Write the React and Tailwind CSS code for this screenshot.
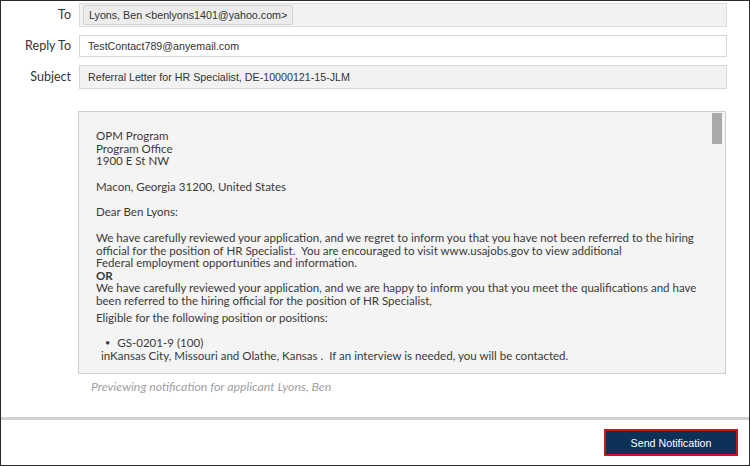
export default function App() {
  const letterFont = { fontFamily: "Lato, 'Open Sans', sans-serif" };
  return (
    <div className="w-[750px] h-[466px] bg-white border border-[#2a2a2a] flex flex-col overflow-hidden">
      <div className="flex flex-col gap-[8px] pt-[2px] pr-[22px] font-['Liberation_Sans',Arial,sans-serif] text-[10.7px] text-[#333]">
        <div className="flex items-center">
          <div className="w-[70px] text-right font-['Lato',sans-serif] text-[12.5px] text-[#333]">To</div>
          <div className="ml-[8px] flex-1 h-[24px] bg-[#f2f2f2] border border-[#dcdcdc] flex items-center pl-[3px]">
            <span className="h-[20px] px-[5px] bg-[#ececec] border border-[#d2d2d2] rounded-[2px] flex items-center">
              Lyons, Ben &lt;benlyons1401@yahoo.com&gt;
            </span>
          </div>
        </div>
        <div className="flex items-center">
          <div className="w-[70px] text-right font-['Lato',sans-serif] text-[12.5px] text-[#333]">Reply To</div>
          <div className="ml-[8px] flex-1 h-[22px] bg-white border border-[#d6d6d6] flex items-center pl-[8px]">
            TestContact789@anyemail.com
          </div>
        </div>
        <div className="flex items-center">
          <div className="w-[70px] text-right font-['Lato',sans-serif] text-[12.5px] text-[#333]">Subject</div>
          <div className="ml-[8px] flex-1 h-[24px] bg-[#f2f2f2] border border-[#d6d6d6] flex items-center pl-[8px]">
            Referral Letter for HR Specialist, DE-10000121-15-JLM
          </div>
        </div>
      </div>

      <div className="mt-[22px] ml-[77px] mr-[23px] h-[263px] bg-[#f4f4f4] border border-[#cfcfcf] flex">
        <div className="flex-1 pl-[17px] pt-[18px] text-[11.55px] leading-[12.6px] text-[#3a3a3a] whitespace-nowrap" style={letterFont}>
          <div>OPM Program</div>
          <div>Program Office</div>
          <div>1900 E St NW</div>
          <div className="mt-[13px]">Macon, Georgia 31200, United States</div>
          <div className="mt-[13px]">Dear Ben Lyons:</div>
          <div className="mt-[13px]">
            We have carefully reviewed your application, and we regret to inform you that you have not been referred to the hiring
            <br />
            official for the position of HR Specialist.&nbsp; You are encouraged to visit www.usajobs.gov to view additional
            <br />
            Federal employment opportunities and information.
          </div>
          <div className="font-bold">OR</div>
          <div>
            We have carefully reviewed your application, and we are happy to inform you that you meet the qualifications and have
            <br />
            been referred to the hiring official for the position of HR Specialist,
          </div>
          <div className="mt-[4px]">Eligible for the following position or positions:</div>
          <div className="mt-[13px] pl-[9px] flex items-center gap-[7px]">
            <span className="text-[9px]">•</span>
            <span>GS-0201-9 (100)</span>
          </div>
          <div className="pl-[5px]">
            inKansas City, Missouri and Olathe, Kansas .&nbsp; If an interview is needed, you will be contacted.
          </div>
        </div>
        <div className="w-[13px] pt-[1px] pr-[3px]">
          <div className="w-[10px] h-[31px] bg-[#a9a9a9]"></div>
        </div>
      </div>

      <div className="ml-[90px] mt-[4px] text-[12.3px] italic text-[#a0a0a0]" style={letterFont}>
        Previewing notification for applicant Lyons, Ben
      </div>

      <div className="mt-[21px] h-[3px] bg-[#d2d2d2]"></div>

      <div className="flex justify-end pr-[11px] pt-[9px]">
        <button className="w-[134px] h-[27px] bg-[#0c3357] border-2 border-[#c8161d] text-white text-[10.7px] font-['Liberation_Sans',Arial,sans-serif]">
          Send Notification
        </button>
      </div>
    </div>
  );
}
